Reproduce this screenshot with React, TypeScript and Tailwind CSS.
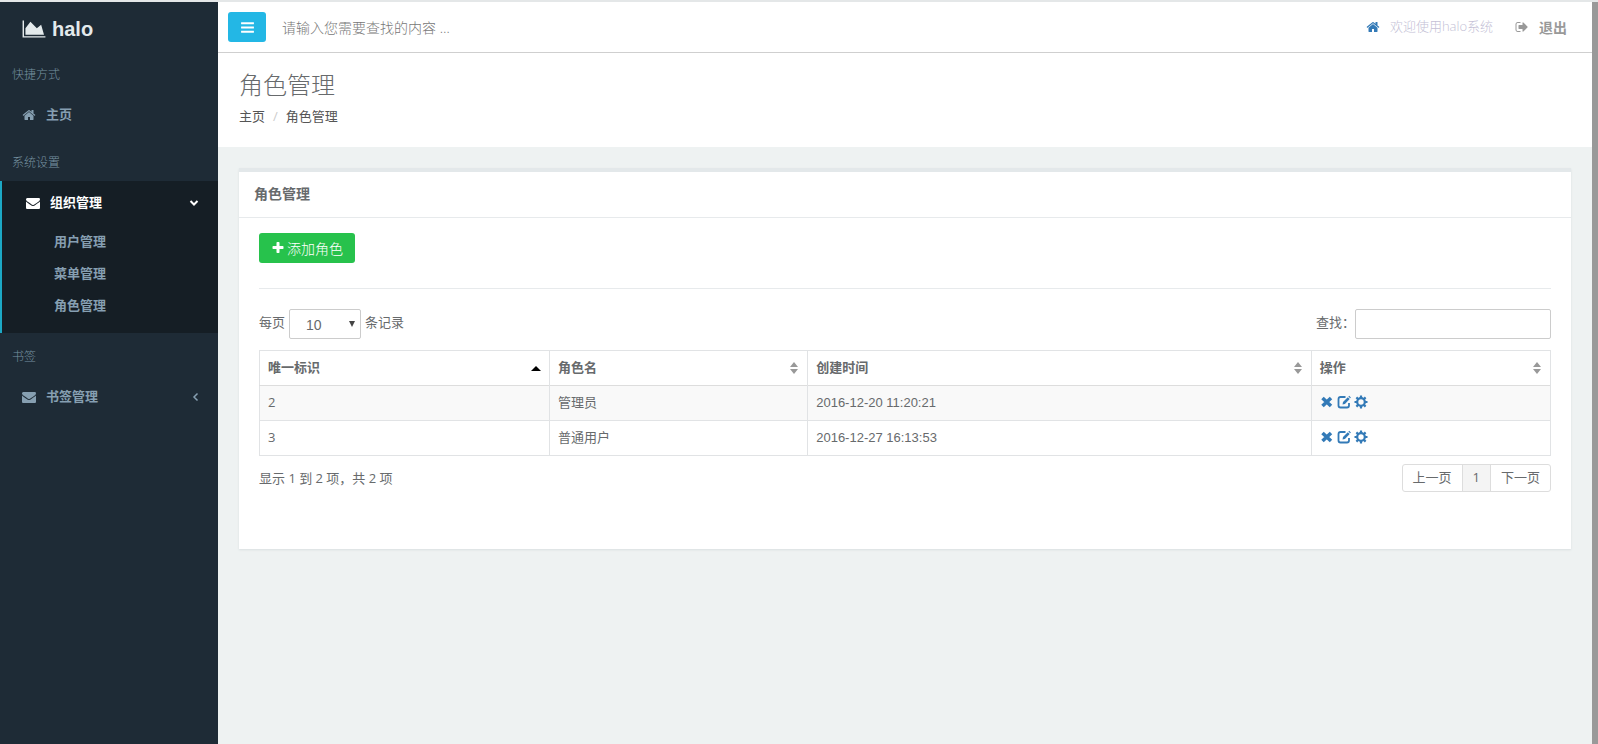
import type { ReactNode } from "react";

const paths = {
  chart: "M2048 1536v128h-2048v-1536h128v1408h1920zM1664 512l256 896h-1664v-576l448-576 576 576z",
  home: "M1472 992v480q0 26-19 45t-45 19h-384v-384h-256v384h-384q-26 0-45-19t-19-45v-480q0-1 .5-3t.5-3l575-474 575 474q1 2 1 6zm223-69l-62 74q-8 9-21 11h-3q-13 0-21-7l-692-577-692 577q-12 8-24 7-13-2-21-11l-62-74q-8-10-7-23.5t11-21.5l719-599q32-26 76-26t76 26l244 204v-195q0-14 9-23t23-9h192q14 0 23 9t9 23v408l219 182q10 8 11 21.5t-7 23.5z",
  envelope: "M1792 710v794q0 66-47 113t-113 47h-1472q-66 0-113-47t-47-113v-794q44 49 101 87 362 246 497 345 57 42 92.5 65.5t94.5 48 110 24.5h2q51 0 110-24.5t94.5-48 92.5-65.5q170-123 498-345 57-39 100-87zm0-294q0 79-49 151t-122 123q-376 261-468 325-10 7-42.5 31t-54 38.5-52 32.5-57.5 27-50 9h-2q-23 0-50-9t-57.5-27-52-32.5-54-38.5-42.5-31q-91-64-262-182.5t-205-142.5q-62-42-117-115.5t-55-136.5q0-78 41.5-130t118.5-52h1472q65 0 112.5 47t47.5 113z",
  signOut: "M704 1440q0 4 1 20t.5 26.5-3 23.5-10 19.5-20.5 6.5h-320q-119 0-203.5-84.5t-84.5-203.5v-704q0-119 84.5-203.5t203.5-84.5h320q13 0 22.5 9.5t9.5 22.5q0 4 1 20t.5 26.5-3 23.5-10 19.5-20.5 6.5h-320q-66 0-113 47t-47 113v704q0 66 47 113t113 47h312l11.5 1 11.5 3 8 5.5 7 9 2 13.5zm928-544q0 26-19 45l-544 544q-19 19-45 19t-45-19-19-45v-288h-448q-26 0-45-19t-19-45v-384q0-26 19-45t45-19h448v-288q0-26 19-45t45-19 45 19l544 544q19 19 19 45z",
  bars: "M1664 1344v128q0 26-19 45t-45 19h-1408q-26 0-45-19t-19-45v-128q0-26 19-45t45-19h1408q26 0 45 19t19 45zm0-512v128q0 26-19 45t-45 19h-1408q-26 0-45-19t-19-45v-128q0-26 19-45t45-19h1408q26 0 45 19t19 45zm0-512v128q0 26-19 45t-45 19h-1408q-26 0-45-19t-19-45v-128q0-26 19-45t45-19h1408q26 0 45 19t19 45z",
  plus: "M1600 736v192q0 40-28 68t-68 28h-416v416q0 40-28 68t-68 28h-192q-40 0-68-28t-28-68v-416h-416q-40 0-68-28t-28-68v-192q0-40 28-68t68-28h416v-416q0-40 28-68t68-28h192q40 0 68 28t28 68v416h416q40 0 68 28t28 68z",
};

function Icon({ name, className }: { name: keyof typeof paths; className: string }) {
  return (
    <svg
      viewBox={name === "chart" ? "0 0 2048 1792" : "0 0 1792 1792"}
      fill="currentColor"
      aria-hidden="true"
      className={`shrink-0 ${className}`}
    >
      <path d={paths[name]} />
    </svg>
  );
}

const roles = [
  { id: 2, name: "管理员", createdAt: "2016-12-20 11:20:21" },
  { id: 3, name: "普通用户", createdAt: "2016-12-27 16:13:53" },
];

const columns = [
  { title: "唯一标识", width: "w-[290px]", sorted: true },
  { title: "角色名", width: "w-1/5", sorted: false },
  { title: "创建时间", width: "w-[39%]", sorted: false },
  { title: "操作", width: "", sorted: false },
];

function Sidebar() {
  return (
    <nav className="w-[218px] shrink-0 bg-[#1e2b36] text-[13px] font-bold text-[#869fb1]">
      <a
        href="#"
        className="flex h-[54px] items-center gap-[6px] pl-[22px] font-['Liberation_Sans',sans-serif] text-[20px] text-[#e4eaec]"
      >
        <Icon name="chart" className="h-5 w-6" />
        halo
      </a>
      <p className="flex h-9 items-center pl-3 pt-[2px] text-[12px] font-light text-[#7793a1]">快捷方式</p>
      <a href="#" className="flex h-[46px] items-center gap-[10px] pl-[22px]">
        <Icon name="home" className="size-[14px]" />
        主页
      </a>
      <p className="flex h-[43px] items-center pl-3 pt-[6px] text-[12px] font-light text-[#7793a1]">系统设置</p>
      <div className="border-l-2 border-[#1ca8c5] bg-[#151e25] pb-3">
        <a href="#" className="flex h-11 items-center gap-[10px] pl-6 pr-[19px] text-white">
          <Icon name="envelope" className="size-[14px]" />
          <span className="flex-1">组织管理</span>
          <svg viewBox="0 0 10 10" className="size-[10px]" fill="none" stroke="currentColor" strokeWidth="2" aria-hidden="true">
            <path d="M1.5 3 5 6.5 8.5 3" />
          </svg>
        </a>
        {["用户管理", "菜单管理", "角色管理"].map((label) => (
          <a key={label} href="#" className="flex h-8 items-center pl-[52px] pt-[2px]">
            {label}
          </a>
        ))}
      </div>
      <p className="flex h-[43px] items-center pl-3 pt-1 text-[12px] font-light text-[#7793a1]">书签</p>
      <a href="#" className="flex h-[42px] items-center gap-[10px] pl-[22px] pr-[17px]">
        <Icon name="envelope" className="size-[14px]" />
        <span className="flex-1">书签管理</span>
        <svg viewBox="0 0 10 10" className="size-[10px]" fill="none" stroke="currentColor" strokeWidth="1.5" aria-hidden="true">
          <path d="M6.5 1.5 3 5 6.5 8.5" />
        </svg>
      </a>
    </nav>
  );
}

function Topbar() {
  return (
    <header className="flex h-[51px] items-center border-b border-[#cfcfcf] bg-white pl-[10px] pr-[25px]">
      <button
        type="button"
        aria-label="菜单"
        className="flex h-[30px] w-[38px] items-center justify-center rounded-[3px] bg-[#23b7e5] text-white"
      >
        <Icon name="bars" className="size-[15px]" />
      </button>
      <input
        type="text"
        aria-label="搜索"
        placeholder="请输入您需要查找的内容 …"
        className="ml-4 min-w-0 flex-1 text-[14px] font-light placeholder:text-[#777]"
      />
      <a href="#" aria-label="主页" className="text-[#337ab7]">
        <Icon name="home" className="size-[14px]" />
      </a>
      <span className="ml-[10px] text-[13px] font-light text-[#c4bfd6]">欢迎使用halo系统</span>
      <a href="#" className="ml-[22px] flex items-center gap-[10px] text-[14px] font-bold text-[#999]">
        <Icon name="signOut" className="size-[14px]" />
        退出
      </a>
    </header>
  );
}

function SortMark({ sorted }: { sorted: boolean }) {
  return (
    <svg viewBox="0 0 10 12" className="h-3 w-[10px]" aria-hidden="true">
      {sorted ? (
        <path d="M0 9 5 4l5 5z" fill="#000" />
      ) : (
        <path d="M1 5 5 0l4 5zM1 7l4 5 4-5z" fill="#999" />
      )}
    </svg>
  );
}

function Action({ label, children }: { label: string; children: ReactNode }) {
  return (
    <a href="#" aria-label={label}>
      <svg viewBox="0 0 14 14" className="size-[14px]" fill="none" stroke="currentColor" aria-hidden="true">
        {children}
      </svg>
    </a>
  );
}

function RoleTable() {
  return (
    <table className="mt-[11px] w-full table-fixed border-collapse border border-[#e1e3e5] text-left">
      <thead>
        <tr className="h-[35px] border-b border-[#ddd]">
          {columns.map((column) => (
            <th key={column.title} className={`${column.width} border-r border-[#e1e3e5] px-2 font-bold`}>
              <div className="flex items-center justify-between">
                {column.title}
                <SortMark sorted={column.sorted} />
              </div>
            </th>
          ))}
        </tr>
      </thead>
      <tbody>
        {roles.map((role) => (
          <tr key={role.id} className="h-[35px] border-b border-[#e1e3e5] odd:bg-[#f9f9f9]">
            <td className="border-r border-[#e1e3e5] px-2">{role.id}</td>
            <td className="border-r border-[#e1e3e5] px-2">{role.name}</td>
            <td className="border-r border-[#e1e3e5] px-2 font-['Liberation_Sans',sans-serif]">
              {role.createdAt}
            </td>
            <td className="px-2 pb-[2px]">
              <div className="flex gap-[3px] text-[#337ab7]">
                <Action label="删除">
                  <path d="m2.5 3 8.5 8m0-8-8.5 8" strokeWidth="3.6" />
                </Action>
                <Action label="编辑">
                  <path d="M8.5 2H3.500Q1.500 2 1.500 4v6.500q0 2 2 2H10q2 0 2-2V8" strokeWidth="1.800" />
                  <path d="m5.500 9.500.5-2.500L10.800 2.200l1.900 1.900L7.900 8.900z" fill="currentColor" stroke="none" />
                  <path d="m11.400 1.500.8-.8 1.700 1.700-.8.8z" fill="currentColor" stroke="none" />
                </Action>
                <Action label="设置">
                  <circle cx="7" cy="7" r="3.800" strokeWidth="2.200" />
                  <path
                    d="M7 .5V3M7 11v2.500M.5 7H3M11 7h2.500M2.400 2.400l1.800 1.800M9.800 9.800l1.800 1.800M2.400 11.600l1.800-1.800M9.800 4.200l1.800-1.800"
                    strokeWidth="2.200"
                  />
                </Action>
              </div>
            </td>
          </tr>
        ))}
      </tbody>
    </table>
  );
}

export default function App() {
  return (
    <div className="flex min-h-screen flex-col border-t-2 border-[#e4e7e8] font-['Open_Sans','Noto_Sans_CJK_SC',sans-serif] text-[13px] text-[#676a6c]">
      <div className="flex flex-1">
        <Sidebar />
        <div className="flex min-w-0 flex-1 flex-col bg-[#eef2f2]">
          <Topbar />
          <div className="bg-white px-[21px] pb-[18px] pt-[14px]">
            <h1 className="text-[24px] font-light leading-9">角色管理</h1>
            <ol className="mt-[2px] flex h-6 items-center gap-2 text-[#555]">
              <li>
                <a href="#">主页</a>
              </li>
              <li className="text-[#ccc]">/</li>
              <li>角色管理</li>
            </ol>
          </div>
          <main className="px-[21px] pt-[21px]">
            <section className="border-t-4 border-[#e3e8ea] bg-white shadow-[0_1px_2px_#d9dfe0]">
              <h2 className="flex h-[46px] items-center border-b border-[#e7eaec] px-[15px] pb-[2px] text-[14px] font-bold">
                角色管理
              </h2>
              <div className="px-5 pb-[57px] pt-[15px]">
                <button
                  type="button"
                  className="flex h-[30px] items-center gap-[2px] rounded-[3px] bg-[#27c24c] px-3 text-[14px] font-light text-white"
                >
                  <Icon name="plus" className="size-[14px]" />
                  添加角色
                </button>
                <hr className="mb-5 mt-[25px] border-[#e7eaec]" />
                <div className="flex items-start justify-between">
                  <label className="flex items-start gap-1 leading-[26px]">
                    每页
                    <span className="relative">
                      <select className="block h-[30px] w-[72px] appearance-none rounded-[2px] border border-[#ccc] bg-white pl-4 pt-[2px] font-['Liberation_Sans',sans-serif] text-[14px]">
                        <option>10</option>
                      </select>
                      <svg
                        viewBox="0 0 6 6"
                        className="pointer-events-none absolute right-[6px] top-3 size-[6px] fill-[#444]"
                        aria-hidden="true"
                      >
                        <path d="M0 0h6L3 6z" />
                      </svg>
                    </span>
                    条记录
                  </label>
                  <label className="flex items-start leading-[26px]">
                    查找：
                    <input
                      type="search"
                      className="h-[30px] w-[196px] rounded-[2px] border border-[#ccc] bg-white px-2"
                    />
                  </label>
                </div>
                <RoleTable />
                <div className="mt-2 flex items-start justify-between">
                  <p className="leading-7">显示 1 到 2 项，共 2 项</p>
                  <div className="flex h-7 divide-x divide-[#ddd] overflow-hidden rounded-[3px] border border-[#ddd]">
                    <button type="button" className="px-[10px]">上一页</button>
                    <button type="button" className="bg-[#f4f4f4] px-[10px]">1</button>
                    <button type="button" className="px-[10px]">下一页</button>
                  </div>
                </div>
              </div>
            </section>
          </main>
        </div>
        <div className="w-[6px] shrink-0 bg-[#999]" />
      </div>
    </div>
  );
}
